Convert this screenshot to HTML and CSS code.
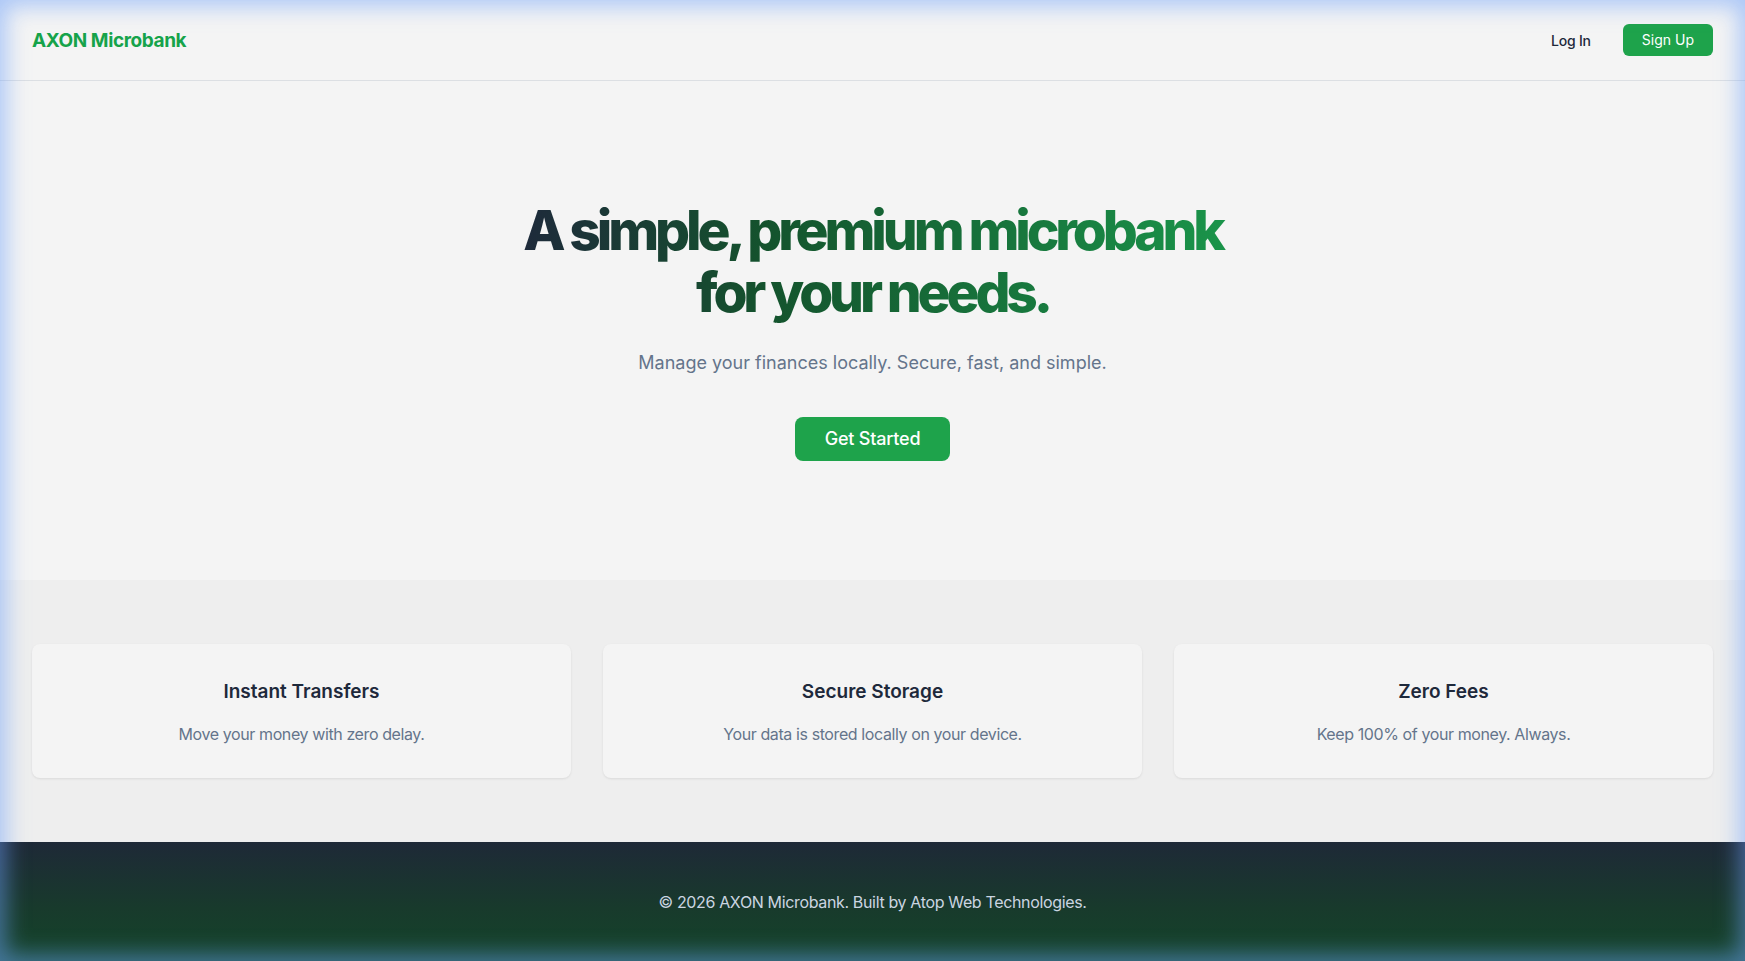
FILE: index.html
```html
<!DOCTYPE html>
<html lang="en">
<head>
<meta charset="utf-8">
<title>AXON Microbank</title>
<link rel="stylesheet" href="styles.css">
</head>
<body>
<div class="page">
  <header class="topbar">
    <a class="brand" href="#">AXON Microbank</a>
    <nav class="nav">
      <a class="nav-link" href="#">Log In</a>
      <a class="btn btn-small" href="#">Sign Up</a>
    </nav>
  </header>

  <main>
    <section class="hero">
      <h1 class="hero-title"><span class="grad">A simple, premium microbank<br>for your needs.</span></h1>
      <p class="hero-sub">Manage your finances locally. Secure, fast, and simple.</p>
      <a class="btn btn-large" href="#">Get Started</a>
    </section>

    <section class="features">
      <div class="card">
        <h3 class="card-title">Instant Transfers</h3>
        <p class="card-text">Move your money with zero delay.</p>
      </div>
      <div class="card">
        <h3 class="card-title">Secure Storage</h3>
        <p class="card-text">Your data is stored locally on your device.</p>
      </div>
      <div class="card">
        <h3 class="card-title">Zero Fees</h3>
        <p class="card-text">Keep 100% of your money. Always.</p>
      </div>
    </section>
  </main>

  <footer class="footer">
    <p>© 2026 AXON Microbank. Built by Atop Web Technologies.</p>
  </footer>
</div>
<div class="glow"></div>
</body>
</html>
```
FILE: styles.css
```css
* { box-sizing: border-box; }

html, body {
  margin: 0;
  padding: 0;
}

body {
  font-family: Inter, "Liberation Sans", sans-serif;
  background: #f4f4f4;
  color: #1e293b;
  -webkit-font-smoothing: antialiased;
}

a { text-decoration: none; white-space: nowrap; }

.page {
  min-height: 100vh;
  display: flex;
  flex-direction: column;
}

.topbar {
  height: 81px;
  display: flex;
  align-items: center;
  justify-content: space-between;
  padding: 0 32px;
  border-bottom: 1px solid #dcdfe3;
  background: #f4f4f4;
}

.brand {
  color: #16a34a;
  font-size: 19px;
  font-weight: 700;
  letter-spacing: -0.4px;
}

.nav {
  display: flex;
  align-items: center;
  gap: 16px;
}

.nav-link {
  color: #1e293b;
  font-size: 14px;
  font-weight: 500;
  letter-spacing: -0.2px;
  padding: 6px 16px;
}

.btn {
  display: inline-block;
  background: #1ea34b;
  color: #ffffff;
  font-weight: 500;
  text-align: center;
}

.btn-small {
  font-size: 14px;
  line-height: 20px;
  font-weight: 400;
  padding: 6px 19px;
  border-radius: 6px;
}

.hero {
  display: flex;
  flex-direction: column;
  align-items: center;
  text-align: center;
  padding: 118px 32px 119px;
  background: #f4f4f4;
}

.hero-title {
  margin: 0 0 26px;
  font-size: 55px;
  line-height: 62px;
  font-weight: 800;
  letter-spacing: -0.075em;
}

.grad {
  display: inline-block;
  background: linear-gradient(90deg, #1e293b 0%, #14532d 35%, #1a944a 100%);
  -webkit-background-clip: text;
  background-clip: text;
  color: transparent;
  padding: 0 6px;
}

.hero-sub {
  margin: 0 0 40px;
  font-size: 18px;
  line-height: 28px;
  color: #64748b;
}

.btn-large {
  font-size: 18px;
  line-height: 28px;
  padding: 8px 30px;
  border-radius: 8px;
  letter-spacing: -0.2px;
}

.features {
  background: #eeeeee;
  padding: 64px 32px;
  display: grid;
  grid-template-columns: repeat(3, 1fr);
  gap: 32px;
}

.card {
  background: #f4f4f4;
  border-radius: 8px;
  padding: 34px 32px 32px;
  text-align: center;
  box-shadow: 0 1px 3px rgba(0, 0, 0, 0.06), 0 1px 2px rgba(0, 0, 0, 0.03);
}

.card-title {
  margin: 0 0 16px;
  font-size: 19px;
  line-height: 28px;
  font-weight: 600;
  color: #1e293b;
}

.card-text {
  margin: 0;
  font-size: 16px;
  line-height: 24px;
  letter-spacing: -0.4px;
  color: #64748b;
}

.footer {
  background: linear-gradient(180deg, #1e2937 0%, #183a2c 55%, #14452a 100%);
  padding: 48px 32px;
  text-align: center;
}

.footer p {
  margin: 0;
  font-size: 16px;
  line-height: 24px;
  letter-spacing: -0.35px;
  color: #cbd5e1;
}

.glow {
  position: fixed;
  inset: 0;
  pointer-events: none;
  box-shadow: inset 0 0 22px 6px rgba(110, 160, 250, 0.55);
}
```
